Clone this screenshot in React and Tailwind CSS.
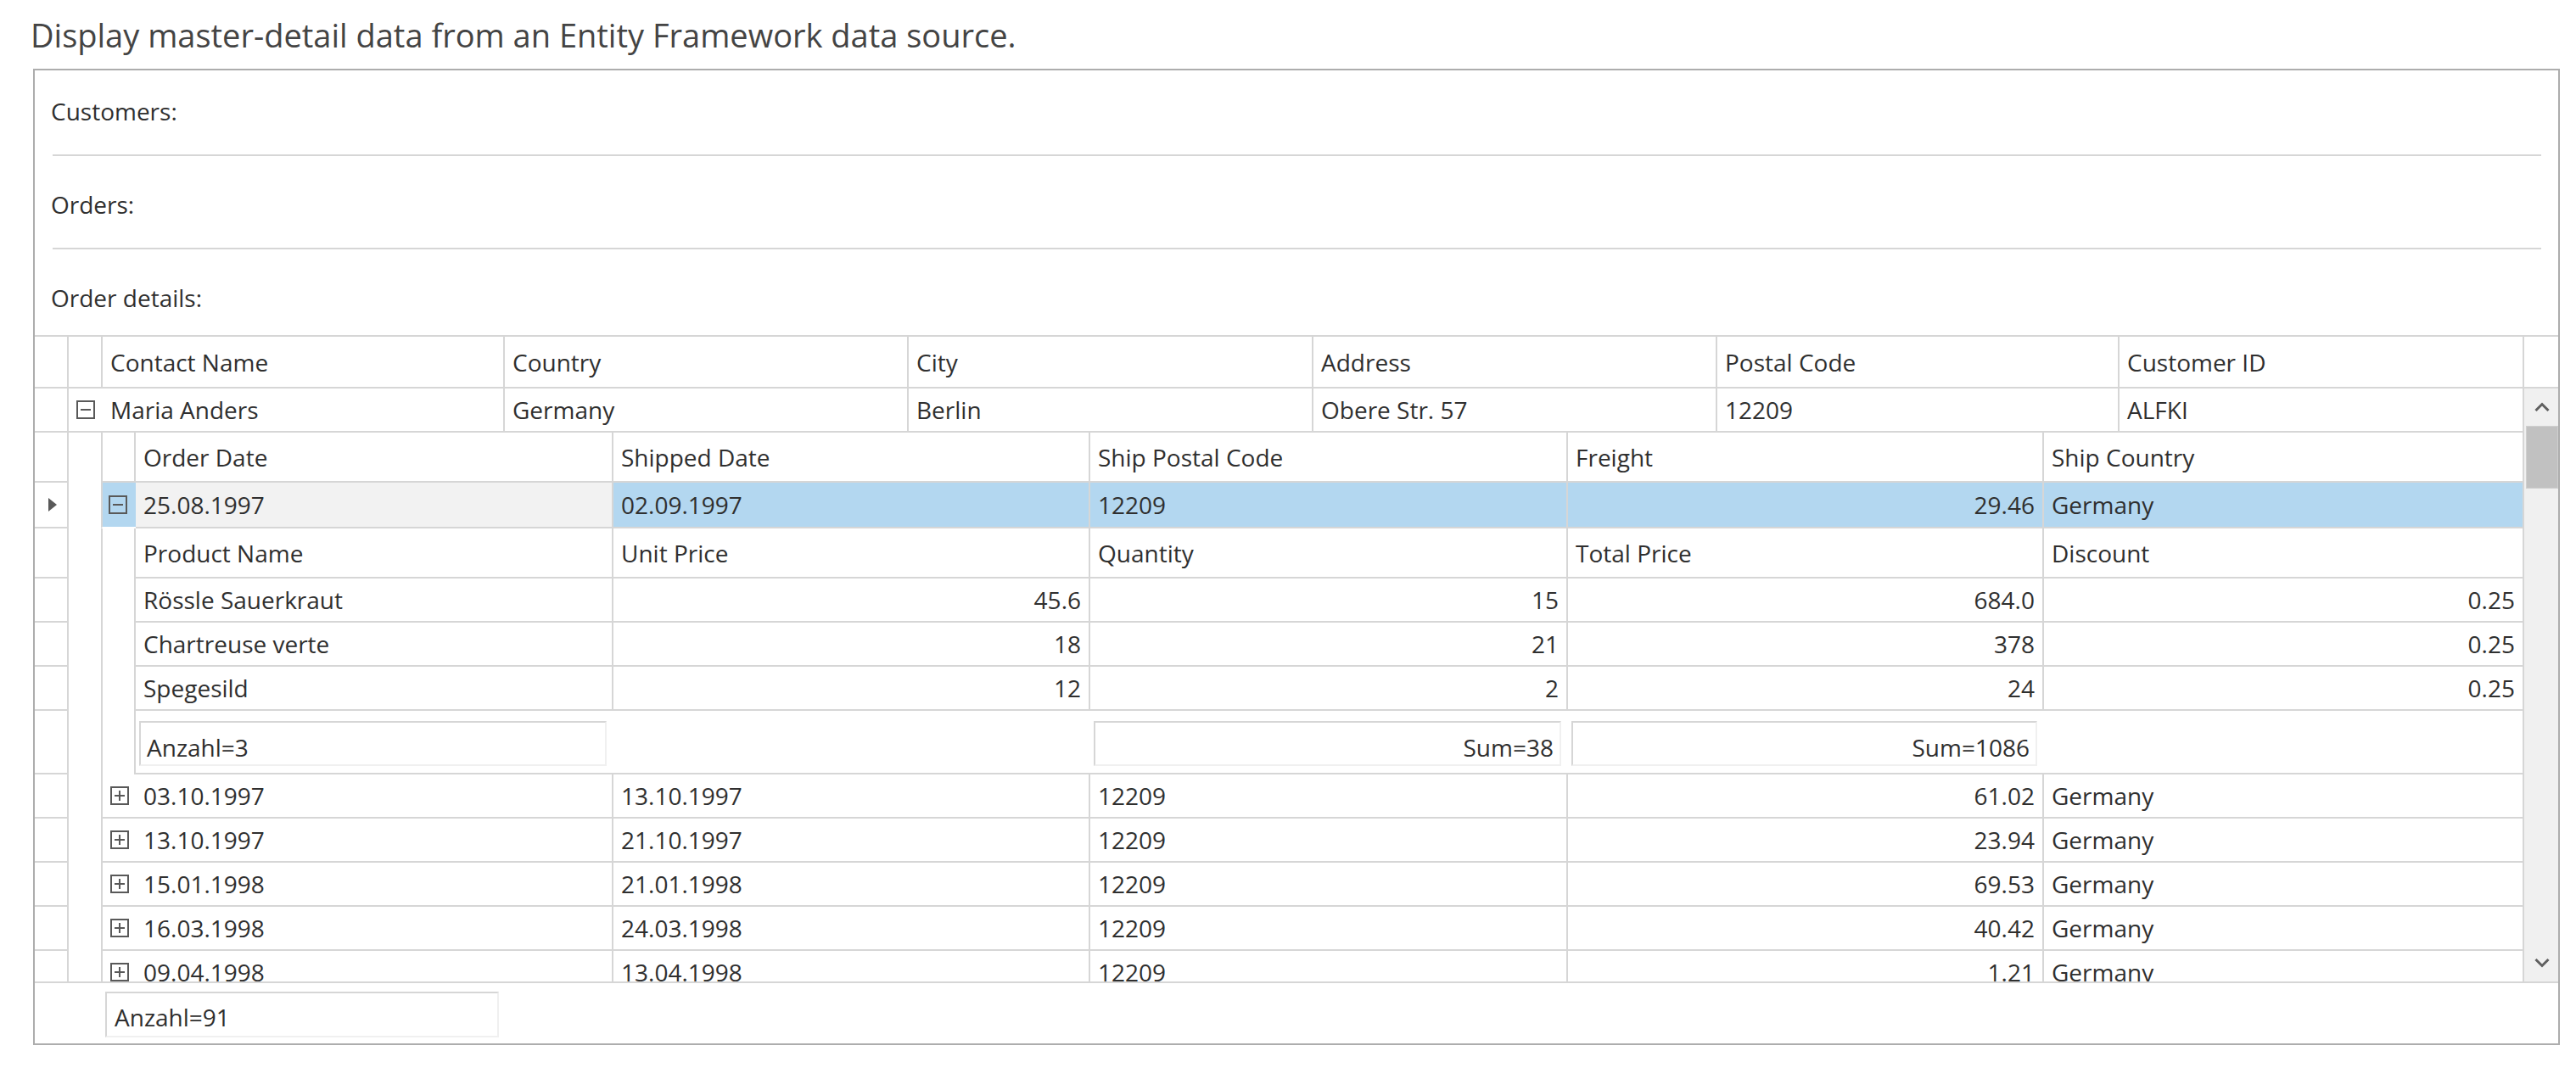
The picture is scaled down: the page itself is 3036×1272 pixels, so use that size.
import clsx from "clsx";

const line = "border-[#d6d6d6]";

const masterCols = [
  ["Contact Name", "w-[474px]"],
  ["Country", "w-[476px]"],
  ["City", "w-[477px]"],
  ["Address", "w-[476px]"],
  ["Postal Code", "w-[474px]"],
  ["Customer ID", "w-[477px]"],
];
const customer = ["Maria Anders", "Germany", "Berlin", "Obere Str. 57", "12209", "ALFKI"];

// order + detail grids share the same column widths
const colW = ["w-[563px]", "w-[562px]", "w-[563px]", "w-[561px]", "w-[566px]"];
const orderCols = ["Order Date", "Shipped Date", "Ship Postal Code", "Freight", "Ship Country"];
const detailCols = ["Product Name", "Unit Price", "Quantity", "Total Price", "Discount"];

const details = [
  ["Rössle Sauerkraut", "45.6", "15", "684.0", "0.25"],
  ["Chartreuse verte", "18", "21", "378", "0.25"],
  ["Spegesild", "12", "2", "24", "0.25"],
];

const orders = [
  ["03.10.1997", "13.10.1997", "12209", "61.02", "Germany"],
  ["13.10.1997", "21.10.1997", "12209", "23.94", "Germany"],
  ["15.01.1998", "21.01.1998", "12209", "69.53", "Germany"],
  ["16.03.1998", "24.03.1998", "12209", "40.42", "Germany"],
  ["09.04.1998", "13.04.1998", "12209", "1.21", "Germany"],
];

const Toggle = ({ open }) => (
  <svg width="22" height="22" viewBox="0 0 22 22" className="shrink-0">
    <rect x="1" y="1" width="20" height="20" fill="none" stroke="#595959" strokeWidth="2" />
    <path d="M5 11h12" stroke="#595959" strokeWidth="2" />
    {!open && <path d="M11 5v12" stroke="#595959" strokeWidth="2" />}
  </svg>
);

const Chevron = ({ down }) => (
  <svg width="18" height="12" viewBox="0 0 18 12">
    <polyline
      points={down ? "1.5,2 9,9.5 16.5,2" : "1.5,10 9,2.5 16.5,10"}
      fill="none"
      stroke="#5f5f5f"
      strokeWidth="3"
    />
  </svg>
);

const Cell = ({ w, right, bottom = true, className, children }) => (
  <div
    className={clsx(
      "flex h-full shrink-0 items-center overflow-hidden whitespace-nowrap border-r-2 pl-[9px] pr-[9px]",
      line,
      bottom && "border-b-2",
      right && "justify-end",
      w,
      className,
    )}
  >
    {children}
  </div>
);

const Indicator = ({ children }) => (
  <div className={clsx("flex h-full w-[40px] shrink-0 items-center justify-center border-r-2 border-b-2", line)}>
    {children}
  </div>
);

const Gap = () => <div className="h-full w-[38px] shrink-0" />;

const SumBox = ({ right, children }) => (
  <div
    className={clsx(
      "flex h-[53px] flex-1 items-center border-2 border-t-[#d6d6d6] border-l-[#d6d6d6] border-r-[#f0f0f0] border-b-[#f0f0f0] pl-[7px] pr-[7px] pt-[8px]",
      right && "justify-end",
    )}
  >
    {children}
  </div>
);

const summary = [
  { box: "Anzahl=3" },
  {},
  { box: "Sum=38", right: true },
  { box: "Sum=1086", right: true },
  {},
];

export default function App() {
  return (
    <div className="h-[1272px] w-[3036px] bg-white font-['Open_Sans','Noto_Sans',sans-serif] text-[28px] text-[#2f2f2f]">
      <div className="h-[81px] pl-[36px] pt-[17px] text-[38px] leading-[48px] text-[#444444]">
        Display master-detail data from an Entity Framework data source.
      </div>

      <div className="ml-[39px] flex h-[1151px] w-[2978px] flex-col border-2 border-[#adadad]">
        <div className="h-[99px] pl-[19px] pt-[28px] leading-[40px]">Customers:</div>
        <div className="ml-[21px] mr-[20px] h-[2px] bg-[#d6d6d6]" />
        <div className="h-[108px] pl-[19px] pt-[37px] leading-[40px]">Orders:</div>
        <div className="ml-[21px] mr-[20px] h-[2px] bg-[#d6d6d6]" />
        <div className="h-[101px] pl-[19px] pt-[37px] leading-[40px]">Order details:</div>

        <div className="h-[2px] bg-[#d6d6d6]" />

        {/* column headers */}
        <div className="flex h-[61px]">
          <Indicator />
          <div className={clsx("h-full w-[40px] shrink-0 border-r-2 border-b-2", line)} />
          {masterCols.map(([label, w]) => (
            <Cell key={label} w={w}>
              {label}
            </Cell>
          ))}
          <div className={clsx("h-full w-[40px] shrink-0 border-b-2", line)} />
        </div>

        {/* rows + scrollbar */}
        <div className="flex h-[699px]">
          <div className="flex w-[2934px] flex-col overflow-hidden">
            <div className="flex h-[52px] shrink-0">
              <Indicator />
              <div className={clsx("flex h-full w-[40px] shrink-0 items-center border-b-2 pl-[9px]", line)}>
                <Toggle open />
              </div>
              {customer.map((v, i) => (
                <Cell key={i} w={masterCols[i][1]}>
                  {v}
                </Cell>
              ))}
            </div>

            <div className="flex h-[59px] shrink-0">
              <Indicator />
              <Gap />
              <div className={clsx("h-full w-[41px] shrink-0 border-l-2 border-r-2 border-b-2", line)} />
              {orderCols.map((c, i) => (
                <Cell key={c} w={colW[i]}>
                  {c}
                </Cell>
              ))}
            </div>

            <div className="flex h-[54px] shrink-0">
              <Indicator>
                <svg width="10" height="16" viewBox="0 0 10 16" className="ml-[4px]">
                  <polygon points="0,0 10,8 0,16" fill="#595959" />
                </svg>
              </Indicator>
              <Gap />
              <div
                className={clsx(
                  "flex h-full w-[41px] shrink-0 items-center border-l-2 border-b-2 border-b-white bg-[#b3d7f0] pl-[7px]",
                  "border-l-[#d6d6d6]",
                )}
              >
                <Toggle open />
              </div>
              {["25.08.1997", "02.09.1997", "12209", "29.46", "Germany"].map((v, i) => (
                <Cell key={i} w={colW[i]} right={i === 3} className={i === 0 ? "bg-[#f2f2f2]" : "bg-[#b3d7f0]"}>
                  {v}
                </Cell>
              ))}
            </div>

            <div className="flex h-[59px] shrink-0">
              <Indicator />
              <Gap />
              <div className={clsx("h-full w-[41px] shrink-0 border-l-2 border-r-2", line)} />
              {detailCols.map((c, i) => (
                <Cell key={c} w={colW[i]}>
                  {c}
                </Cell>
              ))}
            </div>

            {details.map((row) => (
              <div key={row[0]} className="flex h-[52px] shrink-0">
                <Indicator />
                <Gap />
                <div className={clsx("h-full w-[41px] shrink-0 border-l-2 border-r-2", line)} />
                {row.map((v, i) => (
                  <Cell key={i} w={colW[i]} right={i > 0}>
                    {v}
                  </Cell>
                ))}
              </div>
            ))}

            <div className="flex h-[75px] shrink-0">
              <Indicator />
              <Gap />
              <div className={clsx("h-full w-[41px] shrink-0 border-l-2 border-r-2", line)} />
              {summary.map((s, i) => (
                <div
                  key={i}
                  className={clsx(
                    "flex h-full shrink-0 border-b-2 pl-[4px] pr-[8px] pt-[12px] pb-[8px]",
                    line,
                    i === 4 && "border-r-2",
                    colW[i],
                  )}
                >
                  {s.box && <SumBox right={s.right}>{s.box}</SumBox>}
                </div>
              ))}
            </div>

            {orders.map((row, r) => (
              <div key={r} className="flex h-[52px] shrink-0">
                <Indicator />
                <Gap />
                <div className={clsx("flex h-full w-[41px] shrink-0 items-center border-l-2 border-b-2 pl-[9px]", line)}>
                  <Toggle />
                </div>
                {row.map((v, i) => (
                  <Cell key={i} w={colW[i]} right={i === 3}>
                    {v}
                  </Cell>
                ))}
              </div>
            ))}
          </div>

          <div className="flex h-full w-[40px] shrink-0 flex-col bg-[#f0f0f0]">
            <div className="flex h-[44px] shrink-0 items-center justify-center pl-[2px]">
              <Chevron />
            </div>
            <div className="ml-[2px] h-[74px] shrink-0 border border-[#cfcfcf] bg-[#c1c1c1]" />
            <div className="flex-1" />
            <div className="flex h-[44px] shrink-0 items-center justify-center pl-[2px]">
              <Chevron down />
            </div>
          </div>
        </div>

        <div className="h-[2px] bg-[#d6d6d6]" />

        {/* grand total */}
        <div className="flex h-[71px] pl-[83px] pt-[10px]">
          <div className="flex h-[54px] w-[464px] items-center border-2 border-t-[#d6d6d6] border-l-[#d6d6d6] border-r-[#f0f0f0] border-b-[#f0f0f0] pl-[9px] pt-[6px]">
            Anzahl=91
          </div>
        </div>
      </div>
    </div>
  );
}
